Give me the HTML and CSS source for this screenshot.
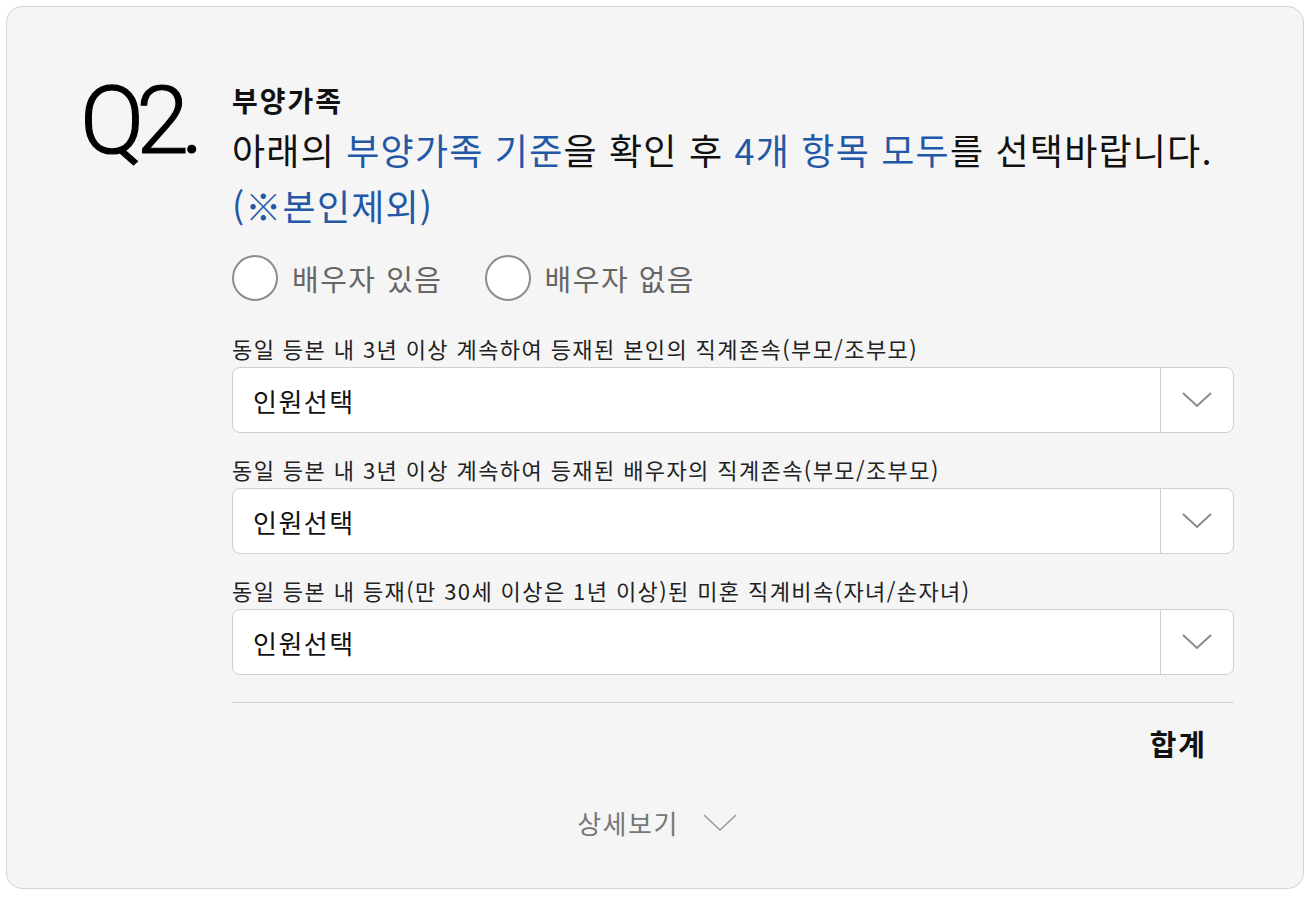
FILE: index.html
```html
<!DOCTYPE html>
<html lang="ko">
<head>
<meta charset="utf-8">
<link rel="stylesheet" href="styles.css">
</head>
<body>
<div class="card">
  <div class="main">
    <div class="qnum">Q2.</div>
    <div class="content">
      <div class="title">부양가족</div>
      <div class="question">아래의 <span class="hl">부양가족 기준</span>을 확인 후 <span class="hl">4개 항목 모두</span>를 선택바랍니다.<br><span class="hl">(※본인제외)</span></div>
      <div class="radios">
        <label class="radio"><span class="circle"></span><span>배우자 있음</span></label>
        <label class="radio"><span class="circle"></span><span>배우자 없음</span></label>
      </div>
      <div class="field first">
        <div class="label">동일 등본 내 3년 이상 계속하여 등재된 본인의 직계존속(부모/조부모)</div>
        <div class="select"><span class="value">인원선택</span><span class="arrow"><svg width="30" height="16" viewBox="0 0 30 16"><path d="M1 1 L15 14 L29 1" fill="none" stroke="#8a8a8a" stroke-width="2"/></svg></span></div>
      </div>
      <div class="field">
        <div class="label">동일 등본 내 3년 이상 계속하여 등재된 배우자의 직계존속(부모/조부모)</div>
        <div class="select"><span class="value">인원선택</span><span class="arrow"><svg width="30" height="16" viewBox="0 0 30 16"><path d="M1 1 L15 14 L29 1" fill="none" stroke="#8a8a8a" stroke-width="2"/></svg></span></div>
      </div>
      <div class="field">
        <div class="label">동일 등본 내 등재(만 30세 이상은 1년 이상)된 미혼 직계비속(자녀/손자녀)</div>
        <div class="select"><span class="value">인원선택</span><span class="arrow"><svg width="30" height="16" viewBox="0 0 30 16"><path d="M1 1 L15 14 L29 1" fill="none" stroke="#8a8a8a" stroke-width="2"/></svg></span></div>
      </div>
      <div class="total">합계</div>
    </div>
  </div>
  <div class="more"><span>상세보기</span><svg width="34" height="18" viewBox="0 0 34 18"><path d="M1 1 L17 16 L33 1" fill="none" stroke="#9a9a9a" stroke-width="1.5"/></svg></div>
</div>
</body>
</html>
```
FILE: styles.css
```css
html, body {
  margin: 0;
  padding: 0;
  background: #ffffff;
}
body {
  font-family: "Noto Sans CJK KR", "Noto Sans", sans-serif;
  color: #111;
}
.card {
  margin: 6px;
  width: 1298px;
  height: 883px;
  box-sizing: border-box;
  border: 1px solid #d4d4d4;
  border-radius: 16px;
  background: #f5f5f5;
  display: flex;
  flex-direction: column;
  padding: 69px 69px 0 73px;
}
.main {
  display: flex;
}
.qnum {
  width: 152px;
  flex: none;
  font-family: Roboto, "Noto Sans", sans-serif;
  font-size: 95px;
  line-height: 100px;
  letter-spacing: -8px;
  margin-top: -5px;
  color: #000;
  font-weight: 300;
  -webkit-text-stroke: 1.2px #000;
}
.content {
  flex: 1;
  display: flex;
  flex-direction: column;
}
.title {
  font-size: 28px;
  font-weight: 700;
  line-height: 34px;
  letter-spacing: 2px;
  margin-top: 7px;
}
.question {
  font-size: 36px;
  line-height: 56px;
  letter-spacing: 1.2px;
  margin-top: 4px;
  color: #111;
}
.hl {
  color: #2358a6;
}
.radios {
  display: flex;
  gap: 42px;
  margin-top: 22px;
}
.radio {
  display: flex;
  align-items: center;
  gap: 14px;
  font-size: 29px;
  letter-spacing: 1.5px;
  color: #666;
}
.circle {
  width: 42px;
  height: 42px;
  border: 2px solid #8c8c8c;
  border-radius: 50%;
  background: #fff;
}
.field {
  display: flex;
  flex-direction: column;
  margin-top: 21px;
}
.field.first {
  margin-top: 32px;
}
.label {
  font-size: 22px;
  line-height: 30px;
  letter-spacing: 1.4px;
  margin-bottom: 4px;
  color: #222;
}
.select {
  height: 66px;
  box-sizing: border-box;
  border: 1px solid #cfcfcf;
  border-radius: 8px;
  background: #fff;
  display: flex;
  align-items: stretch;
}
.value {
  flex: 1;
  display: flex;
  align-items: center;
  padding-left: 20px;
  font-size: 26px;
  letter-spacing: 1.5px;
  color: #111;
}
.arrow {
  width: 72px;
  border-left: 1px solid #cfcfcf;
  display: flex;
  align-items: center;
  justify-content: center;
}
.total {
  margin-top: 27px;
  border-top: 1px solid #d4d4d4;
  padding-top: 20px;
  text-align: right;
  padding-right: 27px;
  font-size: 29px;
  font-weight: 700;
  letter-spacing: 2px;
  line-height: 40px;
}
.more {
  margin-top: 40px;
  display: flex;
  justify-content: center;
  align-items: center;
  gap: 24px;
  font-size: 26px;
  letter-spacing: 1.5px;
  color: #777;
  line-height: 40px;
}
```
